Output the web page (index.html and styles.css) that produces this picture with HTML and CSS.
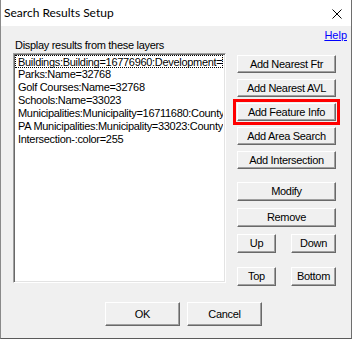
FILE: index.html
```html
<!DOCTYPE html>
<html>
<head>
    <title>Search Results Setup</title>
    <meta name="viewport" content="width=device-width, initial-scale=1.0">
    <link rel="stylesheet" href="styles.css">
</head>
<body>
    <div class="dialog">
        <!-- Title bar -->
        <div class="titlebar">
            <span class="title">Search Results Setup</span>
            <svg class="close" width="10" height="10" viewBox="0 0 10 10">
                <path d="M0.5 0.5 L9.5 9.5 M9.5 0.5 L0.5 9.5" stroke="#000" stroke-width="1" fill="none"/>
            </svg>
        </div>

        <div class="client">
            <div class="help-row"><a href="#">Help</a></div>

            <div class="main">
                <div class="layers">
                    <div class="caption">Display results from these layers</div>
                    <ul class="listbox">
                        <li class="focused">Buildings:Building=16776960:Development=Yes</li>
                        <li>Parks:Name=32768</li>
                        <li>Golf Courses:Name=32768</li>
                        <li>Schools:Name=33023</li>
                        <li>Municipalities:Municipality=16711680:County=Yes</li>
                        <li>PA Municipalities:Municipality=33023:County=Yes</li>
                        <li>Intersection-:color=255</li>
                    </ul>
                </div>

                <div class="actions">
                    <div class="add-group">
                        <button class="btn">Add Nearest Ftr</button>
                        <button class="btn">Add Nearest AVL</button>
                        <button class="btn marked">Add Feature Info</button>
                        <button class="btn">Add Area Search</button>
                        <button class="btn">Add Intersection</button>
                    </div>
                    <div class="edit-group">
                        <button class="btn tall">Modify</button>
                        <button class="btn tall">Remove</button>
                    </div>
                    <div class="pair">
                        <button class="btn tall narrow">Up</button>
                        <button class="btn tall wide">Down</button>
                    </div>
                    <div class="pair last">
                        <button class="btn tall narrow">Top</button>
                        <button class="btn tall wide">Bottom</button>
                    </div>
                </div>
            </div>

            <div class="footer">
                <button class="btn big">OK</button>
                <button class="btn big">Cancel</button>
            </div>
        </div>
    </div>
</body>
</html>
```

FILE: styles.css
```css
* {
    box-sizing: border-box;
    margin: 0;
    padding: 0;
}

body {
    background: #f0f0f0;
    font-family: "Liberation Sans", Arial, sans-serif;
    font-size: 11px;
    line-height: 13px;
    letter-spacing: -0.3px;
    color: #000;
}

/* Dialog frame */
.dialog {
    width: 352px;
    height: 339px;
    background: #f0f0f0;
    border-left: 1px solid #8a8a8a;
    border-right: 1px solid #6e6e6e;
    border-bottom: 1px solid #5a5a5a;
    display: flex;
    flex-direction: column;
}

.titlebar {
    height: 26px;
    background: #fff;
    display: flex;
    align-items: flex-start;
    justify-content: space-between;
    padding: 0 9px 0 3px;
}

.title {
    font-family: Lato, "Liberation Sans", sans-serif;
    font-size: 12px;
    line-height: 16px;
    letter-spacing: 0;
    padding-top: 5px;
    color: #000;
}

.close {
    margin-top: 9px;
    display: block;
}

.client {
    padding: 3px 4px 0 12px;
}

.help-row {
    height: 10px;
    text-align: right;
}

.help-row a {
    color: #0000ff;
    text-decoration: underline;
    letter-spacing: 0;
}

/* Main area */
.main {
    display: flex;
}

.caption {
    padding-left: 2px;
}

.listbox {
    list-style: none;
    margin-top: 1px;
    width: 213px;
    height: 230px;
    background: #fff;
    border: 1px solid;
    border-color: #a0a0a0 #fff #fff #a0a0a0;
    box-shadow: inset 1px 1px 0 #696969, inset -1px -1px 0 #e3e3e3;
    padding: 1px 2px 0 1px;
    overflow: hidden;
}

.listbox li {
    white-space: nowrap;
    overflow: hidden;
    padding: 0 0 0 3px;
    height: 13px;
}

.listbox li.focused {
    outline: 1px dotted #000;
    outline-offset: -1px;
    padding-top: 1px;
    height: 13px;
    line-height: 12px;
}

/* Buttons on the right */
.actions {
    margin-left: 11px;
    padding-top: 16px;
    width: 99px;
}

.add-group {
    display: flex;
    flex-direction: column;
    gap: 6px;
}

.edit-group {
    display: flex;
    flex-direction: column;
    gap: 7px;
    margin-top: 13px;
}

.pair {
    display: flex;
    justify-content: space-between;
    margin-top: 7px;
}

.pair.last {
    margin-top: 14px;
}

.btn {
    display: block;
    width: 99px;
    height: 18px;
    font-family: "Liberation Sans", Arial, sans-serif;
    font-size: 11px;
    line-height: 13px;
    letter-spacing: -0.3px;
    color: #000;
    background: #f0f0f0;
    border: 1px solid;
    border-color: #fff #696969 #696969 #fff;
    box-shadow: inset -1px -1px 0 #a0a0a0;
    padding: 0;
    cursor: pointer;
}

.btn.tall {
    height: 19px;
}

.btn.narrow {
    width: 39px;
}

.btn.wide {
    width: 45px;
}

.btn.marked {
    outline: 3px solid #ff0000;
    outline-offset: 1px;
}

/* OK / Cancel */
.footer {
    display: flex;
    gap: 7px;
    margin-top: 16px;
    padding-left: 92px;
}

.btn.big {
    width: 75px;
    height: 24px;
}
```
